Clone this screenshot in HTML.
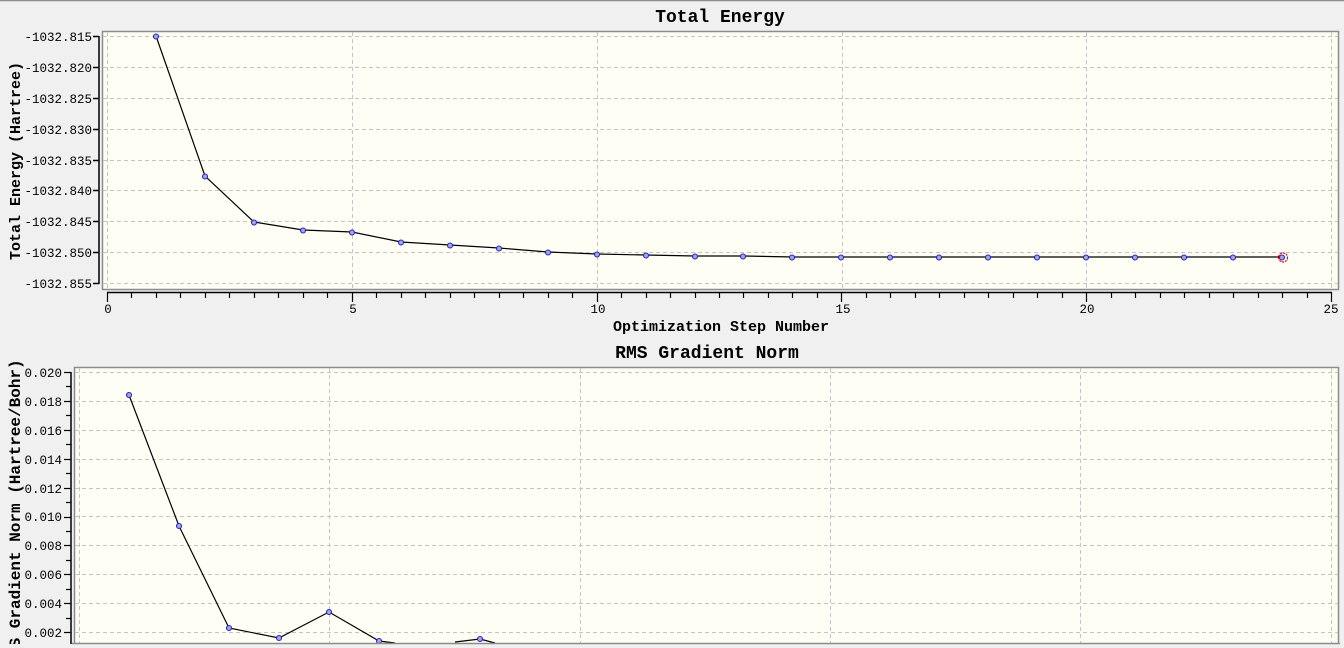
<!DOCTYPE html>
<html><head><meta charset="utf-8"><style>
html,body{margin:0;padding:0;background:#f0f0f0;width:1344px;height:648px;overflow:hidden}
svg{display:block}
text{font-family:"Liberation Mono","DejaVu Sans Mono",monospace;font-size:12.5px;fill:#000}
.t{font-family:"Liberation Mono",monospace;font-weight:bold;font-size:18px}
.al{font-weight:bold;font-size:15px}
</style></head><body>
<svg width="1344" height="648" viewBox="0 0 1344 648">
<rect x="0" y="0" width="1344" height="648" fill="#f0f0f0"/>
<line x1="0" y1="0.5" x2="1344" y2="0.5" stroke="#8a8d96" stroke-width="1.5"/>
<text class="t" x="720" y="22" text-anchor="middle">Total Energy</text>
<rect x="102.5" y="31.5" width="1236" height="258" fill="#fefef5" stroke="#8c8c8c" stroke-width="1.5"/>
<g stroke="#c4c4c4" stroke-dasharray="4,3" stroke-width="1">
<line x1="103" y1="36.5" x2="1338" y2="36.5"/><line x1="103" y1="67.5" x2="1338" y2="67.5"/>
<line x1="103" y1="98.5" x2="1338" y2="98.5"/><line x1="103" y1="129.5" x2="1338" y2="129.5"/>
<line x1="103" y1="160.5" x2="1338" y2="160.5"/><line x1="103" y1="190.5" x2="1338" y2="190.5"/>
<line x1="103" y1="221.5" x2="1338" y2="221.5"/><line x1="103" y1="252.5" x2="1338" y2="252.5"/>
<line x1="103" y1="283.5" x2="1338" y2="283.5"/>
<line x1="107.5" y1="32" x2="107.5" y2="289"/><line x1="352.5" y1="32" x2="352.5" y2="289"/>
<line x1="597.5" y1="32" x2="597.5" y2="289"/><line x1="842.5" y1="32" x2="842.5" y2="289"/>
<line x1="1086.5" y1="32" x2="1086.5" y2="289"/><line x1="1331.5" y1="32" x2="1331.5" y2="289"/>
</g>
<g stroke="#000" stroke-width="1.5">
<line x1="99" y1="36" x2="99" y2="284"/>
<line x1="93" y1="36.5" x2="99" y2="36.5"/><line x1="93" y1="67.5" x2="99" y2="67.5"/><line x1="93" y1="98.5" x2="99" y2="98.5"/>
<line x1="93" y1="129.5" x2="99" y2="129.5"/><line x1="93" y1="160.5" x2="99" y2="160.5"/><line x1="93" y1="190.5" x2="99" y2="190.5"/>
<line x1="93" y1="221.5" x2="99" y2="221.5"/><line x1="93" y1="252.5" x2="99" y2="252.5"/><line x1="93" y1="283.5" x2="99" y2="283.5"/>
</g>
<g text-anchor="end">
<text x="92" y="41">-1032.815</text><text x="92" y="72">-1032.820</text><text x="92" y="103">-1032.825</text>
<text x="92" y="134">-1032.830</text><text x="92" y="165">-1032.835</text><text x="92" y="195">-1032.840</text>
<text x="92" y="226">-1032.845</text><text x="92" y="257">-1032.850</text><text x="92" y="288">-1032.855</text>
</g>
<text class="al" transform="translate(20,161) rotate(-90)" text-anchor="middle">Total Energy (Hartree)</text>
<g stroke="#000" stroke-width="1.5">
<line x1="107" y1="292.5" x2="1332" y2="292.5"/>
</g>
<g stroke="#000" stroke-width="1.2" id="xticks"></g>
<g text-anchor="middle">
<text x="108" y="313">0</text><text x="353" y="313">5</text><text x="598" y="313">10</text>
<text x="843" y="313">15</text><text x="1087" y="313">20</text><text x="1331" y="313">25</text>
</g>
<text class="al" x="721" y="331" text-anchor="middle">Optimization Step Number</text>
<polyline fill="none" stroke="#000" stroke-width="1.2" points="156,36 205,176 254,222 303,230 352,232 401,242 450,245 499,248 548,252 597,254 646,255 695,256 744,256 793,257 842,257 891,257 940,257 989,257 1038,257 1087,257 1136,257 1185,257 1234,257 1282,257"/>
<g id="tp" fill="#a8aac8" stroke="#2020e0" stroke-width="1.1"></g>
<circle cx="1283" cy="257.5" r="4.5" fill="none" stroke="#f00" stroke-width="1.2" stroke-dasharray="2,1"/>
<text class="t" x="707" y="358" text-anchor="middle">RMS Gradient Norm</text>
<rect x="74.5" y="367.5" width="1264" height="290" fill="#fefef5" stroke="#8c8c8c" stroke-width="1.5"/>
<g stroke="#c4c4c4" stroke-dasharray="4,3" stroke-width="1">
<line x1="75" y1="372.5" x2="1338" y2="372.5"/><line x1="75" y1="401.5" x2="1338" y2="401.5"/>
<line x1="75" y1="430.5" x2="1338" y2="430.5"/><line x1="75" y1="459.5" x2="1338" y2="459.5"/>
<line x1="75" y1="488.5" x2="1338" y2="488.5"/><line x1="75" y1="516.5" x2="1338" y2="516.5"/>
<line x1="75" y1="545.5" x2="1338" y2="545.5"/><line x1="75" y1="574.5" x2="1338" y2="574.5"/>
<line x1="75" y1="603.5" x2="1338" y2="603.5"/><line x1="75" y1="632.5" x2="1338" y2="632.5"/>
<line x1="79.5" y1="368" x2="79.5" y2="643"/><line x1="329.5" y1="368" x2="329.5" y2="643"/>
<line x1="580.5" y1="368" x2="580.5" y2="643"/><line x1="830.5" y1="368" x2="830.5" y2="643"/>
<line x1="1080.5" y1="368" x2="1080.5" y2="643"/><line x1="1331.5" y1="368" x2="1331.5" y2="643"/>
</g>
<g stroke="#000" stroke-width="1.5">
<line x1="71" y1="372" x2="71" y2="648"/>
</g>
<g stroke="#000" stroke-width="1.2" id="byt"></g>
<g text-anchor="end">
<text x="62" y="377">0.020</text><text x="62" y="406">0.018</text><text x="62" y="435">0.016</text>
<text x="62" y="464">0.014</text><text x="62" y="493">0.012</text><text x="62" y="521">0.010</text>
<text x="62" y="550">0.008</text><text x="62" y="579">0.006</text><text x="62" y="608">0.004</text>
<text x="62" y="637">0.002</text>
</g>
<text class="al" style="font-size:16px" transform="translate(20,513) rotate(-90)" text-anchor="middle">RMS Gradient Norm (Hartree/Bohr)</text>
<polyline fill="none" stroke="#000" stroke-width="1.2" points="129,395 179,526 229,628 279,638 329,612 379,641 395,643"/>
<polyline fill="none" stroke="#000" stroke-width="1.2" points="455,642 480,639 495,643"/>
<g fill="#a8aac8" stroke="#2020e0" stroke-width="1.1">
<circle cx="129" cy="395" r="2.5"/><circle cx="179" cy="526" r="2.5"/><circle cx="229" cy="628" r="2.5"/>
<circle cx="279" cy="638" r="2.5"/><circle cx="329" cy="612" r="2.5"/><circle cx="379" cy="641" r="2.5"/>
<circle cx="480" cy="639" r="2.5"/>
</g>
<rect x="0" y="644" width="1344" height="4" fill="#f0f0f0"/>
<line x1="72" y1="643.5" x2="1340" y2="643.5" stroke="#8c8c8c" stroke-width="1.5"/>
</svg>
<script>
var ns="http://www.w3.org/2000/svg";
function L(g,x1,y1,x2,y2){var l=document.createElementNS(ns,"line");l.setAttribute("x1",x1);l.setAttribute("y1",y1);l.setAttribute("x2",x2);l.setAttribute("y2",y2);g.appendChild(l);}
var xt=document.getElementById("xticks");
for(var i=0;i<=50;i++){var x=Math.round(107+24.48*i)+0.5;L(xt,x,292,x,(i%10==0)?302:298);}
var tp=document.getElementById("tp");
var ys=[36,176,222,230,232,242,245,248,252,254,255,256,256,257,257,257,257,257,257,257,257,257,257,257];
for(var i=0;i<24;i++){var c=document.createElementNS(ns,"circle");c.setAttribute("cx",Math.round(107+48.96*(i+1)));c.setAttribute("cy",ys[i]+0.5);c.setAttribute("r",2.5);tp.appendChild(c);}
var byt=document.getElementById("byt");
for(var i=0;i<19;i++){var y=Math.round(372+14.45*i)+0.5;L(byt,(i%2==0)?64:66,y,71,y);}
</script>
</body></html>
